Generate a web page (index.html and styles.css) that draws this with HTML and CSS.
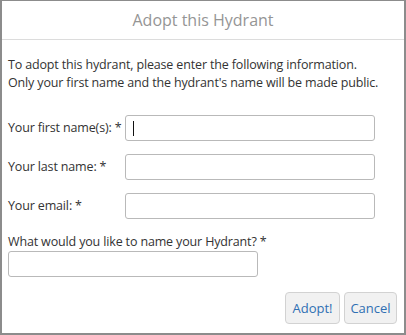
FILE: index.html
```html
<!DOCTYPE html>
<html>
<head>
<meta charset="utf-8">
<link rel="stylesheet" href="styles.css">
</head>
<body>
<div class="dialog">
  <div class="header">Adopt this Hydrant</div>
  <div class="content">
    <p class="intro">To adopt this hydrant, please enter the following information.<br>Only your first name and the hydrant's name will be made public.</p>
    <div class="rows">
      <div class="row"><label class="lbl">Your first name(s): *</label><div class="input focused"><span class="caret"></span></div></div>
      <div class="row"><label class="lbl">Your last name: *</label><div class="input"></div></div>
      <div class="row"><label class="lbl">Your email: *</label><div class="input"></div></div>
    </div>
    <div class="stack">
      <label class="lbl">What would you like to name your Hydrant? *</label>
      <div class="input short"></div>
    </div>
    <div class="actions">
      <button class="btn">Adopt!</button>
      <button class="btn">Cancel</button>
    </div>
  </div>
</div>
</body>
</html>
```
FILE: styles.css
```css
html, body { margin: 0; padding: 0; background: #fff; }
body { font-family: "Open Sans", "Noto Sans", sans-serif; color: #333; font-size: 12.5px; }
.dialog {
  width: 406px; height: 335px; box-sizing: border-box;
  border: 1px solid #8c8c8c; border-width: 1px 2px 2px 2px;
  display: flex; flex-direction: column;
}
.header {
  height: 38px; line-height: 38px; text-align: center;
  font-size: 16px; color: #959595;
  border-bottom: 1px solid #dcdcdc;
  flex: none;
}
.content { padding: 0 7px 0 6px; display: flex; flex-direction: column; }
.intro { margin: 16px 0 0; line-height: 18px; letter-spacing: -0.15px; white-space: nowrap; }
.rows { margin-top: 23px; display: flex; flex-direction: column; gap: 13px; }
.row { display: flex; align-items: flex-start; }
.row .lbl { width: 117px; flex: none; line-height: 26px; white-space: nowrap; letter-spacing: -0.15px; }
.input {
  width: 250px; height: 26px; box-sizing: border-box; flex: none;
  border: 1px solid #b9b9b9; border-radius: 3px; background: #fff;
  display: flex; align-items: center; padding-left: 7px;
}
.caret { width: 1px; height: 15px; background: #111; }
.stack { margin-top: 14px; display: flex; flex-direction: column; }
.stack .lbl { line-height: 18px; white-space: nowrap; letter-spacing: -0.15px; margin-bottom: 0; }
.actions { margin-top: 15px; display: flex; justify-content: flex-end; gap: 4px; }
.btn {
  height: 32px; padding: 0; font-family: inherit; font-size: 13px;
  color: #2f6fb3; background: #f1f1f1; border: 1px solid #d2d2d2; border-radius: 4px;
}
.btn:first-child { width: 55px; }
.btn:last-child { width: 53px; }
```
